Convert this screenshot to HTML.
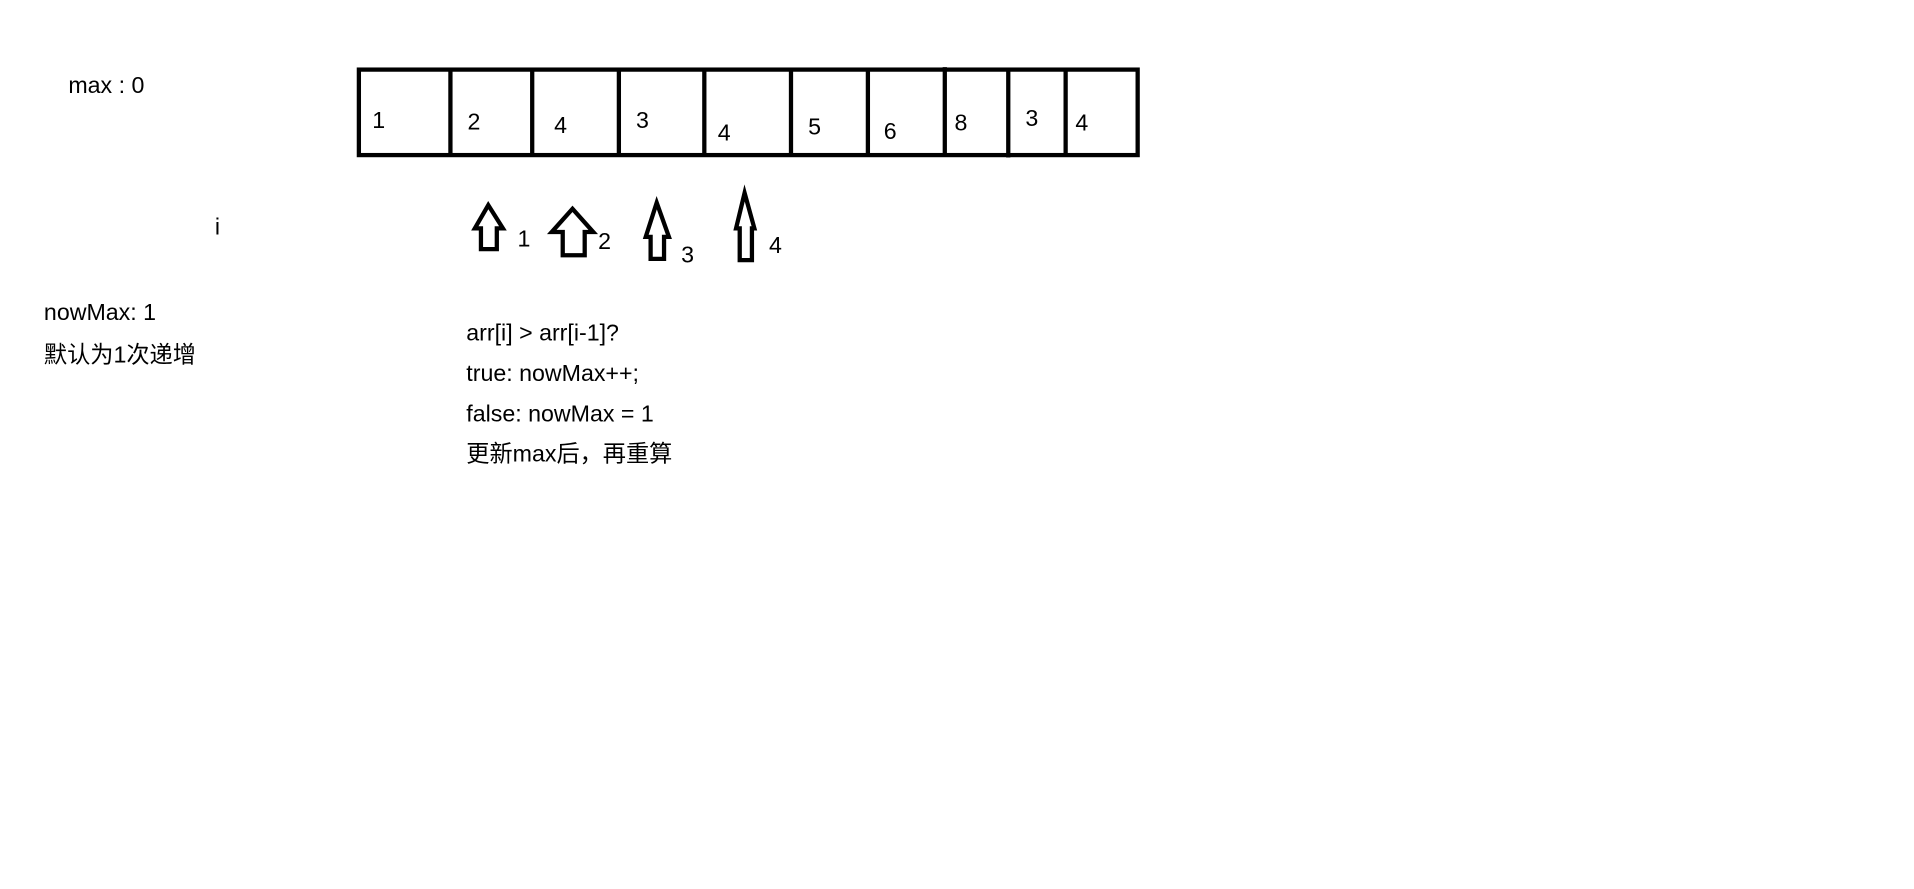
<!DOCTYPE html>
<html><head><meta charset="utf-8"><style>
html,body{margin:0;padding:0;background:#fff;width:1914px;height:889px;overflow:hidden}
svg{display:block}
text{font-family:"Liberation Sans","Noto Sans CJK SC",sans-serif;font-size:19px;fill:#000}
</style></head><body>
<svg width="1914" height="889" viewBox="0 0 1568 728" preserveAspectRatio="none">
<g stroke="#000" stroke-width="3.5" fill="none">
<rect x="294" y="57" width="638" height="70"/>
<line x1="369" y1="57" x2="369" y2="127"/>
<line x1="436" y1="57" x2="436" y2="127"/>
<line x1="507" y1="57" x2="507" y2="127"/>
<line x1="577" y1="57" x2="577" y2="127"/>
<line x1="648" y1="57" x2="648" y2="127"/>
<line x1="711" y1="57" x2="711" y2="127"/>
<line x1="774" y1="55" x2="774" y2="127"/>
<line x1="826" y1="57" x2="826" y2="129"/>
<line x1="873" y1="57" x2="873" y2="127"/>
</g>
<text x="305" y="105">1</text>
<text x="383" y="106">2</text>
<text x="454" y="109">4</text>
<text x="521" y="105">3</text>
<text x="588" y="115">4</text>
<text x="662" y="110">5</text>
<text x="724" y="114">6</text>
<text x="782" y="107">8</text>
<text x="840" y="103">3</text>
<text x="881" y="107">4</text>
<text x="56" y="76">max :  0</text>
<text x="176" y="192">i</text>
<text x="36" y="262">nowMax: 1</text>
<text x="36" y="297">默认为1次递增</text>
<text x="382" y="279">arr[i] &gt; arr[i-1]?</text>
<text x="382" y="312">true: nowMax++;</text>
<text x="382" y="345">false: nowMax = 1</text>
<text x="382" y="378">更新max后，再重算</text>
<g stroke="#000" stroke-width="3.5" fill="#fff" stroke-linejoin="miter">
<path d="M400,168 L412,187 L407,187 L407,204 L394,204 L394,187 L389,187 Z"/>
<path d="M469,171 L486,190 L479,190 L479,209 L461,209 L461,190 L452,190 Z"/>
<path d="M538,166 L548,194 L544,194 L544,212 L533,212 L533,194 L529,194 Z"/>
<path d="M610,158 L618,187 L616,187 L616,213 L606,213 L606,187 L603,187 Z"/>
</g>
<text x="424" y="202">1</text>
<text x="490" y="204">2</text>
<text x="558" y="215">3</text>
<text x="630" y="207">4</text>
</svg>
</body></html>
